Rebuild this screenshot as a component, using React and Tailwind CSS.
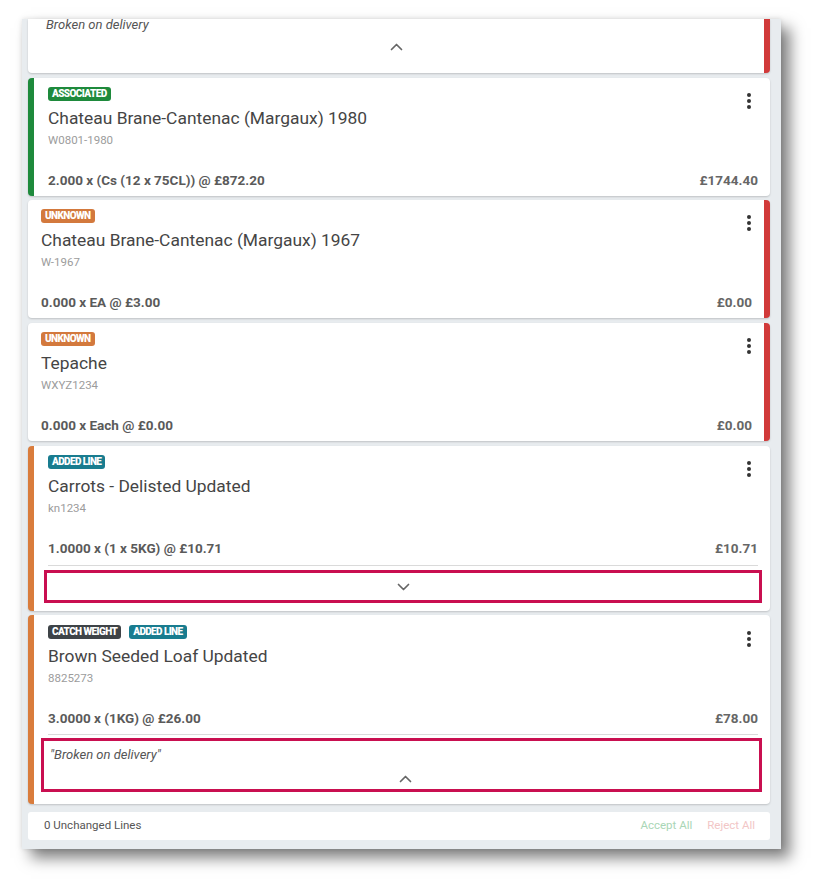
const badgeStyles = {
  associated: 'bg-[#1e8a3c]',
  unknown: 'bg-[#d3793d]',
  added: 'bg-[#197c8f]',
  catch: 'bg-[#3e4347]',
}

const lines = [
  {
    id: 1,
    badges: [{ type: 'associated', label: 'ASSOCIATED' }],
    name: 'Chateau Brane-Cantenac (Margaux) 1980',
    code: 'W0801-1980',
    qty: '2.000 x (Cs (12 x 75CL)) @ £872.20',
    total: '£1744.40',
    side: 'green',
  },
  {
    id: 2,
    badges: [{ type: 'unknown', label: 'UNKNOWN' }],
    name: 'Chateau Brane-Cantenac (Margaux) 1967',
    code: 'W-1967',
    qty: '0.000 x EA @ £3.00',
    total: '£0.00',
    side: 'red',
  },
  {
    id: 3,
    badges: [{ type: 'unknown', label: 'UNKNOWN' }],
    name: 'Tepache',
    code: 'WXYZ1234',
    qty: '0.000 x Each @ £0.00',
    total: '£0.00',
    side: 'red',
  },
]

function Chevron({ up }) {
  return (
    <svg width="13" height="8" viewBox="0 0 13 8" fill="none">
      <path
        d={up ? 'M1.5 6.5 L6.5 1.5 L11.5 6.5' : 'M1.5 1.5 L6.5 6.5 L11.5 1.5'}
        stroke="#666"
        strokeWidth="1.7"
        strokeLinecap="round"
        strokeLinejoin="round"
      />
    </svg>
  )
}

function Kebab({ className }) {
  return (
    <div className={`absolute flex flex-col gap-[2px] ${className}`}>
      <span className="h-[4px] w-[4px] rounded-full bg-[#333]" />
      <span className="h-[4px] w-[4px] rounded-full bg-[#333]" />
      <span className="h-[4px] w-[4px] rounded-full bg-[#333]" />
    </div>
  )
}

function Badge({ type, label }) {
  return (
    <span
      className={`flex h-[14px] items-center rounded-[3px] px-[4px] text-[10px] font-black leading-none tracking-[-0.6px] text-white ${badgeStyles[type]}`}
    >
      {label}
    </span>
  )
}

function LineBody({ line }) {
  return (
    <>
      <div className="flex h-[13px] gap-[8px]">
        {line.badges.map((b) => (
          <Badge key={b.label} {...b} />
        ))}
      </div>
      <h3 className="mt-[7px] text-[17.4px] leading-[22px] text-[#454545]">
        {line.name}
      </h3>
      <p className="mt-1 text-[11.5px] leading-[14px] text-[#9c9c9c]">
        {line.code}
      </p>
      <div className="mt-6 flex items-center justify-between text-[13.5px] font-bold leading-[18px] text-[#5a5a5a]">
        <span>{line.qty}</span>
        <span className="text-[#666]">{line.total}</span>
      </div>
    </>
  )
}

function LineCard({ line }) {
  const isGreen = line.side === 'green'

  return (
    <article
      className={`relative rounded-[4px] bg-white pt-[9px] pb-[7px] shadow-[0_1px_2px_rgba(0,0,0,0.18)] ${
        isGreen
          ? 'border-l-[6px] border-[#1e8a3c] pl-[14px] pr-3'
          : 'border-r-[6px] border-[#d13a3a] pl-[13px] pr-3'
      }`}
    >
      <Kebab className={isGreen ? 'top-[15px] right-[19px]' : 'top-[15px] right-[13px]'} />
      <LineBody line={line} />
    </article>
  )
}

function AddedCard({ line, note, open, extraTop }) {
  return (
    <article
      className={`relative rounded-[4px] border-l-[6px] border-[#d97c3c] bg-white pl-[14px] pr-3 shadow-[0_1px_2px_rgba(0,0,0,0.18)] ${
        extraTop ? 'pt-[10px] pb-3' : 'pt-[9px] pb-2'
      }`}
    >
      <Kebab className={extraTop ? 'top-[16px] right-[19px]' : 'top-[15px] right-[19px]'} />
      <LineBody line={line} />
      <div className={`h-px bg-[#dadada] ${extraTop ? 'mt-[7px]' : 'mt-[8px]'}`} />

      {open ? (
        <div className="mt-[3px] -ml-[7px] -mr-[4px] h-[54px] border-[3px] border-[#c90f50] pl-[6px] pt-[5px]">
          <p className="text-[13px] italic leading-[18px] text-[#555]">{note}</p>
          <div className="mt-[11px] flex justify-center pl-[1px]">
            <Chevron up />
          </div>
        </div>
      ) : (
        <div className="mt-[4px] -mx-[4px] flex h-[33px] items-center justify-center border-[3px] border-[#c90f50]">
          <Chevron />
        </div>
      )}
    </article>
  )
}

export default function App() {
  return (
    <div className="min-h-[884px] bg-white pt-[19px] pl-[22px] font-['Roboto','Liberation_Sans',sans-serif]">
      <div className="h-[830px] w-[759px] overflow-hidden bg-[#e8ecef] pl-[6px] pr-[11px] shadow-[9px_9px_14px_rgba(0,0,0,0.5),0_0_5px_rgba(0,0,0,0.12)]">
        <div className="flex flex-col gap-1">
          {/* tail of the line above, scrolled off */}
          <article className="h-[54px] overflow-hidden rounded-b-[4px] border-r-[6px] border-[#d13a3a] bg-white pl-[18px] pr-3 shadow-[0_1px_2px_rgba(0,0,0,0.18)]">
            <p className="-mt-[3px] text-[13px] italic leading-[18px] text-[#555]">
              Broken on delivery
            </p>
            <div className="mt-[9px] flex justify-center pr-[5px]">
              <Chevron up />
            </div>
          </article>

          <div className="mt-px">
            <LineCard line={lines[0]} />
          </div>
          <LineCard line={lines[1]} />
          <div className="mt-px">
            <LineCard line={lines[2]} />
          </div>

          <div className="mt-px">
            <AddedCard
              line={{
                badges: [{ type: 'added', label: 'ADDED LINE' }],
                name: 'Carrots - Delisted Updated',
                code: 'kn1234',
                qty: '1.0000 x (1 x 5KG) @ £10.71',
                total: '£10.71',
              }}
            />
          </div>

          <AddedCard
            open
            extraTop
            note={'"Broken on delivery"'}
            line={{
              badges: [
                { type: 'catch', label: 'CATCH WEIGHT' },
                { type: 'added', label: 'ADDED LINE' },
              ],
              name: 'Brown Seeded Loaf Updated',
              code: '8825273',
              qty: '3.0000 x (1KG) @ £26.00',
              total: '£78.00',
            }}
          />

          <div className="mt-1 flex h-[28px] items-center justify-between rounded-[3px] bg-white pl-4 pr-[15px] text-[11.5px]">
            <span className="text-[#555]">0 Unchanged Lines</span>
            <div className="flex gap-[15px]">
              <span className="text-[#a9d6b6]">Accept All</span>
              <span className="text-[#f2c6c6]">Reject All</span>
            </div>
          </div>
        </div>
      </div>
    </div>
  )
}
